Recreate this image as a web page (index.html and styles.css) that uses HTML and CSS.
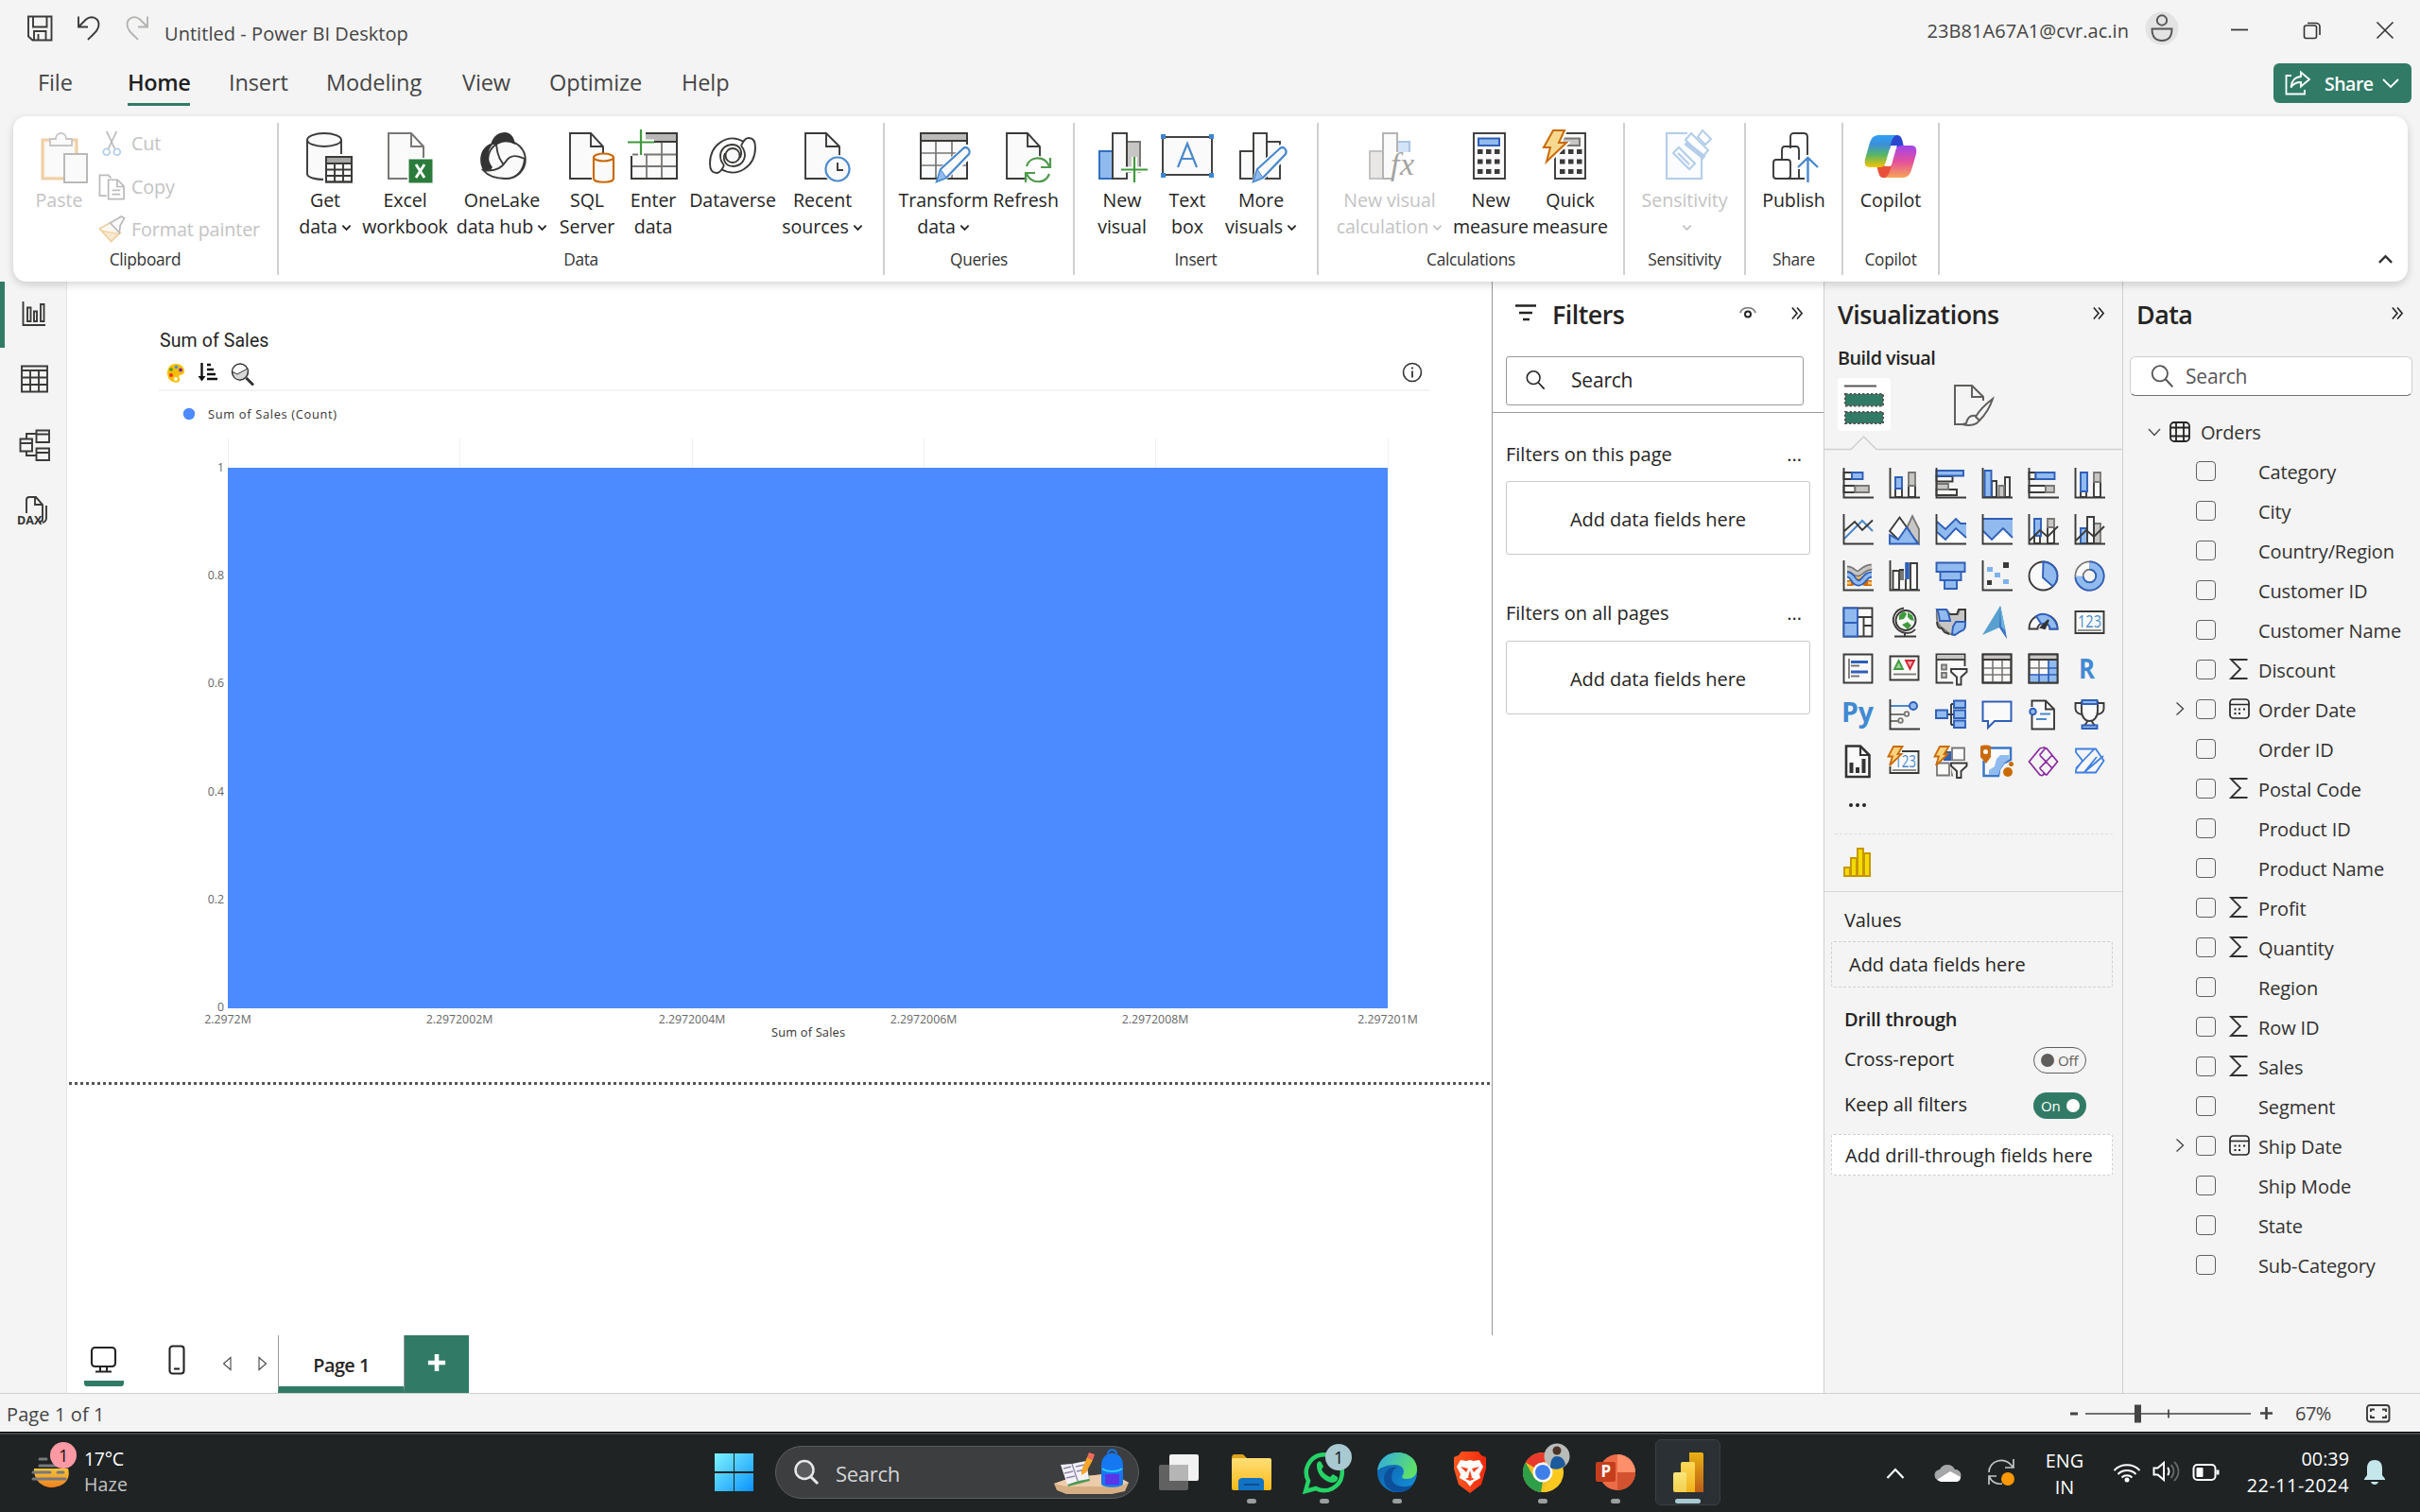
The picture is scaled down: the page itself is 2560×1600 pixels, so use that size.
FILE: index.html
```html
<!DOCTYPE html>
<html lang="en">
<head>
<meta charset="utf-8">
<title>Untitled - Power BI Desktop</title>
<link rel="stylesheet" href="styles.css">
</head>
<body>
<svg class="defs" width="0" height="0">
  <defs>
    <symbol id="dbl-chevron" viewBox="0 0 14 16"><path d="M1.5 1.5 7 8l-5.500 6.500M7 1.500 12.500 8 7 14.500" fill="none" stroke="#252423" stroke-width="1.700"/></symbol>
    <symbol id="sigma" viewBox="0 0 24 24"><path d="M20.500 2H3l10 10L3 22h17.500" fill="none" stroke="#323130" stroke-width="1.800"/></symbol>
    <symbol id="calendar" viewBox="0 0 24 24"><rect x="2" y="2" width="20" height="20" rx="3.500" fill="none" stroke="#252423" stroke-width="1.700"/><path d="M2 7.500h20" stroke="#252423" stroke-width="1.500"/><path d="M6.500 12.500h2M11 12.500h2M16 12.500h2M6.500 17h2M11 17h2" stroke="#252423" stroke-width="2"/></symbol>
    <symbol id="expand" viewBox="0 0 10 16"><path d="M1.500 1.500 8.500 8l-7 6.500" fill="none" stroke="#484644" stroke-width="1.400"/></symbol>
    <symbol id="caret" viewBox="0 0 12 8"><path d="M1.500 1.500 6 6l4.500-4.500" fill="none" stroke="currentColor" stroke-width="2"/></symbol>
    <symbol id="mag" viewBox="0 0 24 24"><circle cx="10" cy="9.500" r="7.500" fill="none" stroke="currentColor" stroke-width="1.700"/><path d="m15.500 15 7 7.500" stroke="currentColor" stroke-width="1.900"/></symbol>
    <linearGradient id="winGrad" x1="0" y1="0" x2="1" y2="1"><stop offset="0" stop-color="#7df3ff"/><stop offset="1" stop-color="#0a93ff"/></linearGradient>
    <linearGradient id="cpL" x1="0" y1="0" x2="0" y2="1"><stop offset="0" stop-color="#2fa0f5"/><stop offset=".3" stop-color="#3b8fd8"/><stop offset=".6" stop-color="#55b56a"/><stop offset="1" stop-color="#f2c500"/></linearGradient>
    <linearGradient id="cpR" x1="0" y1="0" x2="0" y2="1"><stop offset="0" stop-color="#a044ee"/><stop offset=".5" stop-color="#e5509a"/><stop offset="1" stop-color="#f7a455"/></linearGradient>
    <linearGradient id="edgeTop" x1="0" y1="0" x2="1" y2=".4"><stop offset="0" stop-color="#2ea8e8"/><stop offset="1" stop-color="#5fe06a"/></linearGradient>
    <linearGradient id="edgeLow" x1="0" y1="0" x2="1" y2="1"><stop offset="0" stop-color="#0c59a4"/><stop offset="1" stop-color="#1593dd"/></linearGradient>
    <linearGradient id="folderGrad" x1="0" y1="0" x2="0" y2="1"><stop offset="0" stop-color="#ffdf77"/><stop offset="1" stop-color="#fbb917"/></linearGradient>
    <linearGradient id="braveGrad" x1="0" y1="0" x2="1" y2="0"><stop offset="0" stop-color="#ff5a1f"/><stop offset="1" stop-color="#f2280c"/></linearGradient>
    <linearGradient id="biA" x1="0" y1="0" x2="0" y2="1"><stop offset="0" stop-color="#ebb112"/><stop offset="1" stop-color="#bb5c17"/></linearGradient>
    <linearGradient id="biB" x1="0" y1="0" x2="0" y2="1"><stop offset="0" stop-color="#ffd95a"/><stop offset="1" stop-color="#f0b318"/></linearGradient>
    <linearGradient id="biC" x1="0" y1="0" x2="0" y2="1"><stop offset="0" stop-color="#fbe67b"/><stop offset="1" stop-color="#f2cf4f"/></linearGradient>
    <linearGradient id="sunGrad" x1="0" y1="0" x2="0" y2="1"><stop offset="0" stop-color="#f6c63a"/><stop offset="1" stop-color="#f0801e"/></linearGradient>
  </defs>
</svg>

<header class="titlebar">
  <svg class="tb-save" viewBox="0 0 28 28"><path class="k" d="M1.500 1.500h24.500v25H6l-4.500-4zM6.500 1.500v11h14.500v-11M7.500 26.500v-9.500h12.500v9.500M12 20v6"/></svg>
  <svg class="tb-undo" viewBox="0 0 26 28"><path class="k" d="M2 1.500v11h10M2.500 12 10 4.500c5-4.500 13-2 13.500 5 .300 6-5 10-11.500 16.500"/></svg>
  <svg class="tb-redo" viewBox="0 0 26 28"><path d="M24 1.500v11H14M23.500 12 16 4.500C11 0 3 2.500 2.500 9.500c-.300 6 5 10 11.500 16.500" fill="none" stroke="#b3b0ad" stroke-width="1.800"/></svg>
  <span class="tb-title">Untitled - Power BI Desktop</span>
  <span class="tb-user">23B81A67A1@cvr.ac.in</span>
  <svg class="tb-avatar" viewBox="0 0 36 36"><circle cx="18" cy="18" r="17.500" fill="#e3e3e3"/><circle cx="18" cy="9.500" r="5.200" fill="none" stroke="#555" stroke-width="1.900"/><path d="M7.500 18.500h21c0 8-3.500 12.500-10.500 12.500S7.500 26.500 7.500 18.500z" fill="none" stroke="#555" stroke-width="1.900"/></svg>
  <svg class="tb-win" viewBox="0 0 20 20"><path d="M1 9.500h18" stroke="#333" stroke-width="1.700"/></svg>
  <svg class="tb-win" viewBox="0 0 20 20"><rect x="1.500" y="5" width="13" height="13.500" rx="2" class="w"/><path class="w" d="M5 2.500h9a4 4 0 0 1 4 4V15"/></svg>
  <svg class="tb-win" viewBox="0 0 20 20"><path class="w" d="m1.500 1.500 17 17M18.500 1.500l-17 17"/></svg>
</header>

<nav class="menu">
  <a>File</a><a class="on">Home</a><a>Insert</a><a>Modeling</a><a>View</a><a>Optimize</a><a>Help</a>
  <button class="share"><svg viewBox="0 0 28 26" width="28" height="26"><path d="M7 5H1.500v19.500H21V20" class="ws"/><path d="M17 1.500 26 9l-9 7.500v-4.500c-5 0-8 1.500-10.500 5.500C7 10.500 10.500 6.500 17 6z" class="ws"/></svg><span>Share</span><svg viewBox="0 0 18 10" width="18" height="10"><path d="m1 1 8 8 8-8" class="ws"/></svg></button>
</nav>

<section class="ribbon">
  <div class="grp g-clip">
    <div class="btns">
      <div class="paste dim"><svg viewBox="0 0 60 60"><rect x="12" y="13" width="36" height="41" fill="#fbf3e6" stroke="#efcfa4" stroke-width="3"/><rect x="15" y="16" width="30" height="35" fill="#fafafa"/><path d="M20 19v-7h6c0-8 11-8 11 0h6v7z" fill="#fafafa" stroke="#c8c6c4" stroke-width="1.800"/><rect x="35" y="28" width="24" height="30" fill="#fafafa" stroke="#b8b6b4" stroke-width="1.900"/></svg><span>Paste</span></div>
      <div class="clips dim">
        <div><svg viewBox="0 0 30 30"><path d="m9 2 9 19M20 2l-9 19" stroke="#bbb" stroke-width="1.700" fill="none"/><circle cx="9" cy="24.500" r="3.500" fill="none" stroke="#b3cdea" stroke-width="1.800"/><circle cx="20.500" cy="24.500" r="3.500" fill="none" stroke="#b3cdea" stroke-width="1.800"/></svg>Cut</div>
        <div><svg viewBox="0 0 30 30"><path d="M9 25H1.500V2.500h9.500l3 3" class="d"/><path d="M11 7.500h10l7 7v14H11zM20.500 7.500v7.500H28M15 19h9M15 23.500h9" class="d"/></svg>Copy</div>
        <div><svg viewBox="0 0 30 30"><path d="M1.500 14.500 13 8l11 11-10 9.500z" fill="#fdf8ef" stroke="#efcfa4" stroke-width="1.800"/><path d="m4 17 18 3-8 8z" fill="#f8ead0" stroke="#efcfa4" stroke-width="1.200"/><path d="m13 8 4-2 8-5 3.500 2-4.500 8-1 8z" fill="#fafafa" class="d2"/></svg>Format painter</div>
      </div>
    </div>
    <label>Clipboard</label>
  </div>
  <div class="grp g-data">
    <div class="btns">
      <div class="b w84"><svg viewBox="0 0 60 60"><path class="kf" d="M11 13v36c0 8 36 8 36 0V13"/><ellipse class="kf" cx="29" cy="13" rx="18" ry="7"/><g class="halo"><rect x="31" y="31" width="27" height="27"/></g><rect class="kf" x="31" y="31" width="27" height="26.500"/><path d="M31 34.500h27" stroke="#a9a7a5" stroke-width="5"/><path class="k" d="M31 31h27v26.500H31zM31 38h27M31 44.500h27M31 51h27M40 38v19M49 38v19"/></svg><span>Get<br>data<svg class="cr"><use href="#caret"/></svg></span></div>
      <div class="b w85"><svg viewBox="0 0 60 60"><path d="M12 6h24l13 14v34H12z" fill="#fafafa" stroke="#797774" stroke-width="2"/><path d="M36 6v14h13" fill="none" stroke="#797774" stroke-width="2"/><rect x="32" y="32" width="28" height="28" fill="#fff"/><rect x="33.500" y="33.500" width="25" height="25" fill="#2b7c3c"/><path d="m41 39 9 14M50 39l-9 14" stroke="#fff" stroke-width="2.800"/></svg><span>Excel<br>workbook</span></div>
      <div class="b w120"><svg viewBox="0 0 60 60"><circle class="kf" cx="35" cy="34" r="19.800"/><path d="M18 18C21 8 27 5 33 5c6 0 10 5 11 13-7-4-15-4-20 0z" fill="#333"/><path d="M18 17C6 22 5 36 10 45c4 1 8 0 10-3-6-8-6-17 0-24z" fill="#333"/><path class="k" d="M24 18c1 11 4 19 11 24"/><path d="M10 45c12 2 19-1 24-9 5-8 12-7 20-3-1 13-9 21-20 21-10 0-19-3-24-9z" class="kf"/></svg><span>OneLake<br>data hub<svg class="cr"><use href="#caret"/></svg></span></div>
      <div class="b w60"><svg viewBox="0 0 60 60"><path class="kf" d="M12 6h22l13 14v34H12z"/><path class="k" d="M34 6v14h13"/><path d="M35 31h26v27H35z" fill="#fff"/><path d="M37 32v22c0 5 21 5 21 0V32" fill="#fafafa" stroke="#ca6a07" stroke-width="2.200"/><ellipse cx="47.500" cy="31.500" rx="10.500" ry="4" fill="#fafafa" stroke="#ca6a07" stroke-width="2.200"/></svg><span>SQL<br>Server</span></div>
      <div class="b w80"><svg viewBox="0 0 60 60"><path d="M24 6h31v48H7V30" class="kf"/><path d="M22 10.500h32" stroke="#b9b7b5" stroke-width="8"/><path d="M8 28.500h47M8 41h47M23 28v25M39 14v40" stroke="#797774" stroke-width="1.800" fill="none"/><path class="k" d="M22 15h33M22 6h33v48H7V30"/><path d="M4 15.500h27M17 3v27" stroke="#fff" stroke-width="6"/><path d="M3 15.500h28M17 2v27" stroke="#3f9a3c" stroke-width="2.200"/></svg><span>Enter<br>data</span></div>
      <div class="b w88"><svg viewBox="0 0 60 60"><g id="swirl"><path class="k" d="M42 15C25 5 6 18 6 38c0 7 3 10 7 10 5 0 6-5 8-8"/><path class="k" d="M21 40C13 30 18 19 29 18c9 0 12 7 9 14"/></g><use href="#swirl" transform="rotate(180 30 29.500)"/><circle class="kf" cx="30" cy="29.500" r="7.500"/></svg><span>Dataverse</span></div>
      <div class="b w102"><svg viewBox="0 0 60 60"><path class="kf" d="M12 6h22l14 14v34H12z"/><path class="k" d="M34 6v14h14"/><circle cx="46" cy="44" r="15" fill="#fff"/><circle cx="46" cy="44" r="12.500" fill="#fafafa" stroke="#4a89cc" stroke-width="2.200"/><path class="k" d="M46 37v8h6"/></svg><span>Recent<br>sources<svg class="cr"><use href="#caret"/></svg></span></div>
    </div>
    <label>Data</label>
  </div>
  <div class="grp g-query">
    <div class="btns">
      <div class="b w100"><svg viewBox="0 0 60 60"><path class="kf" d="M6 6h49v48H6z"/><path d="M7 10.500h47" stroke="#bdbbb9" stroke-width="7"/><path d="M6 27h49M6 40h49M22 15v38M39 15v38" stroke="#797774" stroke-width="1.700"/><path class="k" d="M6 14h49M6 6h49v48H6z"/><path d="m22 58 4-15 26-25h10v12L32 56z" fill="#fff"/><path d="m23 57 4-13 24-22c4-3 8 2 6 6L33 53z" fill="#fafafa" stroke="#4a89cc" stroke-width="2.200"/><path d="m23 57 4-13 6 9z" fill="#91bbee" stroke="#4a89cc"/></svg><span>Transform<br>data<svg class="cr"><use href="#caret"/></svg></span></div>
      <div class="b w74"><svg viewBox="0 0 60 60"><path class="kf" d="M10 6h22l13 14v34H10z"/><path class="k" d="M32 6v14h13"/><circle cx="43" cy="45" r="15" fill="#fff"/><path d="M31 41c3-11 19-12 24 0M56 32v10H46M55 49c-4 11-19 11-24 0M30 58V48h10" fill="none" stroke="#4f9a4c" stroke-width="2.200"/></svg><span>Refresh</span></div>
    </div>
    <label>Queries</label>
  </div>
  <div class="grp g-insert">
    <div class="btns">
      <div class="b w62"><svg viewBox="0 0 60 60"><rect x="6" y="25" width="14" height="29" fill="#91bbee" stroke="#2f6fc0" stroke-width="2"/><rect x="35" y="15" width="14" height="32" fill="#c8c6c4" stroke="#797774" stroke-width="2"/><rect x="20" y="6" width="15" height="48" class="kf"/><path d="M29 44.500h29M43 31v28" stroke="#fff" stroke-width="6"/><path d="M29 44.500h28M43 31v27" stroke="#3f9a3c" stroke-width="2.200"/></svg><span>New<br>visual</span></div>
      <div class="b w76"><svg viewBox="0 0 60 60"><rect x="4" y="10" width="52" height="40" class="kf"/><path d="M2 7h5v5H2zM53 7h5v5h-5zM2 48h5v5H2zM53 48h5v5h-5z" fill="#3d85d6"/><path d="m20 42 10-25 10 25M24 33h12" fill="none" stroke="#4a89cc" stroke-width="2.200"/></svg><span>Text<br>box</span></div>
      <div class="b w80"><svg viewBox="0 0 60 60"><rect x="8" y="25" width="14" height="29" class="kf"/><rect x="36" y="15" width="14" height="39" class="kf"/><rect x="22" y="6" width="14" height="48" class="kf"/><path d="m20 60 4-17 26-25h10v12L32 56z" fill="#fff"/><path d="m22 57 4-13 24-22c4-3 8 2 6 6L32 53z" fill="#fafafa" stroke="#4a89cc" stroke-width="2.200"/><path d="m22 57 4-13 6 9z" fill="#91bbee" stroke="#4a89cc"/></svg><span>More<br>visuals<svg class="cr"><use href="#caret"/></svg></span></div>
    </div>
    <label>Insert</label>
  </div>
  <div class="grp g-calc">
    <div class="btns">
      <div class="b w124 dim"><svg viewBox="0 0 60 60"><rect x="9" y="25" width="14" height="29" fill="#e8e7e6" stroke="#c4c2c0" stroke-width="2"/><rect x="38" y="15" width="13" height="14" fill="#d3e4f8" stroke="#aac4e4" stroke-width="2"/><rect x="23" y="6" width="15" height="48" fill="#fafafa" stroke="#b5b3b1" stroke-width="2"/><rect x="33" y="26" width="27" height="30" fill="#fff"/><text x="31" y="50" font-family="Liberation Serif, serif" font-style="italic" font-size="34" fill="#a5a3a1" textLength="25">fx</text></svg><span>New visual<br>calculation<svg class="cr"><use href="#caret"/></svg></span></div>
      <div class="b w90"><svg viewBox="0 0 60 60"><rect x="12" y="6" width="33" height="48" class="kf"/><rect x="17" y="11.500" width="22" height="7.500" fill="#91bbee" stroke="#2f5fb8" stroke-width="2"/><path d="M16 25.500h25M16 36h25M16 46.500h25" stroke="#3a3a38" stroke-width="5" stroke-dasharray="5.500 3.500"/></svg><span>New<br>measure</span></div>
      <div class="b w78"><svg viewBox="0 0 60 60"><rect x="14" y="6" width="32" height="48" class="kf"/><rect x="20" y="11.500" width="20" height="7.500" fill="#c8c6c4" stroke="#797774" stroke-width="2"/><path d="M19 25.500h24M19 36h24M19 46.500h24" stroke="#3a3a38" stroke-width="5" stroke-dasharray="5.500 3.500"/><path d="M12 1h16l-6 14h9L6 40H0l4-17H0z" fill="#fff"/><path d="M12 3h12l-6 13h8L5 36l4-15H2z" fill="#f6d98f" stroke="#ca6a07" stroke-width="2"/></svg><span>Quick<br>measure</span></div>
    </div>
    <label>Calculations</label>
  </div>
  <div class="grp g-sens">
    <div class="btns"><div class="b dim"><svg viewBox="0 0 60 60"><path d="M33 6H11v48h37V30" fill="#fafcff" stroke="#b3cdea" stroke-width="2"/><path d="m18 27 6-6 17 17-6 6zM23 27l12 12" fill="none" stroke="#b3cdea" stroke-width="2"/><path d="m31 13 6-7 18 18-6 7z" fill="#fff" stroke="#b3cdea" stroke-width="2"/><path d="m31 16 20 16" stroke="#b3cdea" stroke-width="5"/><path d="m44 10 5-7 9 9-6 6z" fill="#fff" stroke="#b3cdea" stroke-width="2"/></svg><span>Sensitivity<br><svg class="cr"><use href="#caret"/></svg></span></div></div>
    <label>Sensitivity</label>
  </div>
  <div class="grp g-share">
    <div class="btns"><div class="b"><svg viewBox="0 0 60 60"><path class="k" d="M27 20V10c0-2 1-4 3-4h11c3 0 4 2 4 4v19M18 34V24c0-2 1-4 3-4h12c2 0 3 2 3 4v10M36 44v10"/><rect x="9" y="34" width="18" height="20" rx="3" class="k"/><path class="k" d="M24 54h18M27 22v-2"/><path d="M45.500 58V32M35 42l10.500-10L56 42" fill="none" stroke="#4a89cc" stroke-width="2.400"/></svg><span>Publish</span></div></div>
    <label>Share</label>
  </div>
  <div class="grp g-copilot">
    <div class="btns"><div class="b"><svg viewBox="0 0 60 60"><path d="M27 8h10c4 0 5 4 6 8l1 5H33c-4 0-5 3-6 7z" fill="#2b46cf"/><path d="M15 40h18l-3 6c-1 4-2 7-5 7h-3c-5 0-5-8-7-13z" fill="#e9503a"/><path d="M18 8h18c-4 2-5 6-6 10l-5 18c-1 4-3 6-7 6H8c-5 0-6-4-5-9l5-17c2-6 5-8 10-8z" fill="url(#cpL)"/><path d="M42 53H24c4-2 5-6 6-10l5-18c1-4 3-6 7-6h10c5 0 6 4 5 9l-5 17c-2 6-5 8-10 8z" fill="url(#cpR)"/><path d="M30 19h7l-2 4-5 18h-7l3-5z" fill="#fff" opacity=".900"/></svg><span>Copilot</span></div></div>
    <label>Copilot</label>
  </div>
  <svg class="fold" viewBox="0 0 18 12"><path d="m2 10 7-7 7 7" fill="none" stroke="#333" stroke-width="2.600"/></svg>
</section>

<main class="work">
  <aside class="rail">
    <div class="rail-on"><svg viewBox="0 0 36 36"><path class="k" d="M6.500 5v25H30M11 11.500h3.500V26H11zM18 15.500h3V26h-3zM25 8h3.500v18H25z"/></svg></div>
    <div><svg viewBox="0 0 36 36"><path class="k" d="M5 4.500h27v27H5zM5 9h27M5 16.500h27M5 24h27M14 9v22.500M23 9v22.500"/></svg></div>
    <div><svg viewBox="0 0 36 36"><path class="k" d="M20.500 2.500H34V15H20.500zM20.500 6.500H34M3.500 11.500H16v13H3.500zM3.500 16H16M20.500 21.500H34V34H20.500zM20.500 26H34M10 11.500V6h10M10 24.500V29h10"/></svg></div>
    <div><svg viewBox="0 0 36 36"><path class="k" d="M10 20V6q0-3 3-3h7l7 8v15q0 3-3 3M19 3v8h8M31 12v13q0 4-4 5"/><text x="0" y="32" class="dax">DAX</text></svg></div>
  </aside>

  <div class="center">
    <div class="upper">
      <div class="canvas">
        <h3>Sum of Sales</h3>
        <div class="ctools">
          <svg width="20" height="22" viewBox="0 0 20 22"><path d="M10 1c6 0 9 4 9 8 0 3-3 4-5 4-2 1 1 4 0 6-3 4-13 1-13-8C1 5 4 1 10 1z" fill="#f6be00"/><circle cx="5" cy="7" r="1.800" fill="#3f9a3c"/><circle cx="10.500" cy="4.500" r="1.800" fill="#4a90d9"/><circle cx="15" cy="7.500" r="2" fill="#8426a5"/><circle cx="5" cy="13" r="2" fill="#f0302c"/><circle cx="10" cy="17" r="2" fill="#fff"/></svg>
          <svg width="22" height="20" viewBox="0 0 22 20"><path d="M4.500 0v16" stroke="#111" stroke-width="2.400"/><path d="M.500 14h8l-4 5.500z" fill="#111"/><path d="M10 2h4M10 7h7M10 12h9M10 17h11" stroke="#111" stroke-width="2.400"/></svg>
          <svg width="26" height="26" viewBox="0 0 26 26"><circle cx="10" cy="9.500" r="8.500" fill="#fff" stroke="#333" stroke-width="1.400"/><path d="M2 9.500 7 12l11-6c1 6-2 11-8 12-5 0-8-4-8-8.500z" fill="#d8d8d8" stroke="#333" stroke-width="1"/><path d="m16.500 16 7.500 7.500" stroke="#333" stroke-width="3"/></svg>
          <svg class="info" width="22" height="22" viewBox="0 0 22 22"><circle cx="11" cy="11" r="9.500" fill="none" stroke="#333" stroke-width="1.600"/><path d="M11 9.500v7M11 5.500v2" stroke="#333" stroke-width="1.800"/></svg>
        </div>
        <svg class="plot" viewBox="168 414 1344 696">
          <circle cx="200" cy="438" r="6.200" fill="#4c8aff"/>
          <text x="220" y="443" textLength="136" class="leg">Sum of Sales (Count)</text>
          <path d="M241.500 464v32M486.500 464v32M732.500 464v32M977.500 464v32M1222.500 464v32M1468.500 464v32" stroke="#efefef"/>
          <rect x="241" y="495" width="1227" height="572" fill="#4c8aff"/>
          <g class="ax" text-anchor="end"><text x="237" y="499">1</text><text x="237" y="613">0.8</text><text x="237" y="727">0.6</text><text x="237" y="842">0.4</text><text x="237" y="956">0.2</text><text x="237" y="1070">0</text></g>
          <g class="ax" text-anchor="middle"><text x="241" y="1082.500">2.2972M</text><text x="486" y="1082.500">2.2972002M</text><text x="732" y="1082.500">2.2972004M</text><text x="977" y="1082.500">2.2972006M</text><text x="1222" y="1082.500">2.2972008M</text><text x="1468" y="1082.500">2.297201M</text></g>
          <text x="855" y="1096.500" text-anchor="middle" textLength="78" class="leg">Sum of Sales</text>
        </svg>
        <div class="fold-line"></div>
      </div>

      <section class="filters">
        <div class="ptitle"><svg width="24" height="20" viewBox="0 0 24 20"><path d="M1 2.500h22M5 10h14M9 17h7" stroke="#252423" stroke-width="2.300"/></svg><h2>Filters</h2><svg class="eye" width="18" height="16" viewBox="0 0 18 16"><path d="M1 8C3 1 15 1 17 8" fill="none" stroke="#777" stroke-width="1.700"/><circle cx="9" cy="9.500" r="3" fill="none" stroke="#252423" stroke-width="2"/></svg><svg class="dc"><use href="#dbl-chevron"/></svg></div>
        <div class="fsearch"><svg width="22" height="22"><use href="#mag"/></svg>Search</div>
        <div class="fhead"><span>Filters on this page</span><i>...</i></div>
        <div class="fbox">Add data fields here</div>
        <div class="fhead second"><span>Filters on all pages</span><i>...</i></div>
        <div class="fbox">Add data fields here</div>
      </section>
    </div>
    <footer class="tabs">
      <div class="dev on"><svg width="30" height="32" viewBox="0 0 30 32"><rect x="2" y="3" width="25" height="20" rx="3.500" class="t"/><path class="t" d="M11 23v5M18 23v5M6 28.500h17"/></svg></div>
      <svg class="phone" width="18" height="32" viewBox="0 0 18 32"><rect x="1.500" y="1.500" width="15" height="29" rx="3" class="t"/><path class="t" d="M6 25.500h6"/></svg>
      <svg class="tri" width="10" height="16" viewBox="0 0 10 16"><path d="M9 1.500v13L1.500 8z" class="tr"/></svg>
      <svg class="tri two" width="10" height="16" viewBox="0 0 10 16"><path d="M1 1.500v13L8.500 8z" class="tr"/></svg>
      <div class="tab">Page 1</div>
      <div class="plus"><svg width="20" height="20" viewBox="0 0 22 22"><path d="M11 1v20M1 11h20" stroke="#fff" stroke-width="5"/></svg></div>
    </footer>
  </div>

  <section class="viz">
    <div class="ptitle"><h2>Visualizations</h2><svg class="dc"><use href="#dbl-chevron"/></svg></div>
    <h4>Build visual</h4>
    <div class="modes">
      <div class="mode"><svg width="44" height="42" viewBox="0 0 44 42"><path d="M1 1.500h34" stroke="#555" stroke-width="2"/><rect x="2" y="10" width="40" height="12.500" fill="#317b66" stroke="#555" stroke-width="2" stroke-dasharray="2.500 2"/><rect x="2" y="29" width="40" height="12" fill="#317b66" stroke="#555" stroke-width="2" stroke-dasharray="2.500 2"/></svg></div>
      <svg class="fmt" width="46" height="46" viewBox="0 0 46 46"><path d="M9 43H2V2h18l12 12v4M20 2v12h12" fill="none" stroke="#605e5c" stroke-width="2"/><path d="M42 16c-8 6-14 12-18 19l4 4c6-6 11-14 14-23zM24 34c-6-1-9 3-10 8l-4 1c7 2 16 1 18-5" fill="none" stroke="#605e5c" stroke-width="2"/></svg>
    </div>
    <svg class="notch" width="315" height="16" viewBox="0 0 315 16"><path d="M0 14.500h28l13.500-13.500L55 14.500h260" fill="none" stroke="#cfcfcf" stroke-width="1.500"/></svg>
    <div class="icons">
      <svg viewBox="0 0 33 33"><path class="kf" d="M1.500 5h9v7h-9zM1.500 19h12v7h-12z"/><path class="bf" d="M10 5h11.500v7H10z"/><path class="gf" d="M13.500 19H28v7H13.500z"/><path class="k" d="M1.500 0v31.500H33"/></svg>
      <svg viewBox="0 0 33 33"><path class="kf" d="M7 21h7v10H7zM21 19h7v12h-7z"/><path class="bf" d="M7 10h7v12H7z"/><path class="gf" d="M21 5h7v14h-7z"/><path class="k" d="M1.500 0v31.500H33"/></svg>
      <svg viewBox="0 0 33 33"><path class="kf" d="M1.500 9h17v5.500h-17zM1.500 23H23v6H1.500z"/><path class="gf" d="M1.500 17H14v6H1.500z"/><path class="bf" d="M1.500 3H30v5.500H1.500z"/><path class="k" d="M1.500 0v31.500H33"/></svg>
      <svg viewBox="0 0 33 33"><path class="kf" d="M11 14h5v17h-5zM25 10h5v21h-5z"/><path class="gf" d="M18.500 19H24v12h-5.500z"/><path class="bf" d="M3.500 3h7v28h-7z"/><path class="k" d="M1.500 0v31.500H33"/></svg>
      <svg viewBox="0 0 33 33"><path class="kf" d="M1.500 5h7v7h-7zM1.500 19H19v7H1.500z"/><path class="bf" d="M8.500 5h20v7h-20z"/><path class="gf" d="M19 19h9v7h-9z"/><path class="k" d="M1.500 0v31.500H33"/></svg>
      <svg viewBox="0 0 33 33"><path class="kf" d="M7 25h6v6H7zM21 15h7v16h-7z"/><path class="bf" d="M7 5h7v20H7z"/><path class="gf" d="M21 5h7v10h-7z"/><path class="k" d="M1.500 0v31.500H33"/></svg>

      <svg viewBox="0 0 33 33"><path d="M2 26 21 7l11 11" fill="none" stroke="#4a89cc" stroke-width="2"/><path class="k" d="m2 18 11-10 8 9L32 6.500M1.500 0v31.500H33"/></svg>
      <svg viewBox="0 0 33 33"><path class="gf" d="M18 17 25 2l7 14v15z"/><path class="kf" d="M1 18 11.500 3.500 22 18 10 27z"/><path class="bf" d="m1 22 9 5 9-13 12 17.500H1z"/></svg>
      <svg viewBox="0 0 33 33"><path d="M2 8v22h31V18z" fill="#fff"/><path class="bl" d="m2 8 9 8L22 5l5 5h6v15L22 15 11 27l-9-8z"/><path d="m2 8 9 8L22 5l5 5h6M2 19l9 8 11-12 11 10" class="bs"/><path class="k" d="M1.500 0v31.500H33"/></svg>
      <svg viewBox="0 0 33 33"><path d="M2 20v10h31V20z" fill="#fff"/><path class="bl" d="M2 5h31v20l-10-10-12 12-9-9z"/><path class="bs" d="M2 5h31M2 18l9 9 12-12 10 10"/><path class="k" d="M1.500 0v31.500H33"/></svg>
      <svg viewBox="0 0 33 33"><path class="kf" d="M7 22h6v9H7zM21 14h7v17h-7z"/><path class="bf" d="M7 5h7v18H7z"/><path class="gf" d="M21 5h7v9h-7z"/><path class="k" d="M1.500 0v31.500H33M2 28l11-11 8 7L32 13"/></svg>
      <svg viewBox="0 0 33 33"><path class="bf" d="M7 15h7v16H7z"/><path class="gf" d="M21 10h7v21h-7z"/><path class="kf" d="M14 3h7v28h-7z"/><path class="k" d="M1.500 0v31.500H33M2 28l11-11 8 7L32 13"/></svg>

      <svg viewBox="0 0 33 33"><path d="M5 24h5c4 0 6-6 10-3l4 3h7" stroke="#ca6a07" stroke-width="6" fill="none"/><path d="M5 24h4M27 24h4M15 18h6" stroke="#f6c36a" stroke-width="3"/><path d="M5 9c6 0 7 5 11 5s5-6 15-7" stroke="#797774" stroke-width="7" fill="none"/><path d="M5 9c6 0 7 5 11 5s5-6 15-7" stroke="#c8c6c4" stroke-width="3.500" fill="none"/><path d="M5 15c7 0 6 9 12 9s6-9 14-9" stroke="#2f5fb8" stroke-width="7" fill="none"/><path d="M5 15c7 0 6 9 12 9s6-9 14-9" stroke="#91bbee" stroke-width="3.500" fill="none"/><path class="k" d="M1.500 0v31.500H33"/></svg>
      <svg viewBox="0 0 33 33"><path class="kf" d="M4.500 11H11v20H4.500zM23 3h7v28h-7z"/><path d="M14 10v11" stroke="#797774" stroke-width="4"/><path d="M19.500 2v18" stroke="#2f5fb8" stroke-width="4.500"/><path class="k" d="M1.500 0v31.500H33M11 10h5M18 20v11"/></svg>
      <svg viewBox="0 0 33 33"><path class="bf" d="M1.500 2.500h30V12h-30zM5.500 12h22v9h-22zM10 21h13v9H10z"/></svg>
      <svg viewBox="0 0 33 33"><path class="k" d="M1.500 0v31.500H33"/><path d="M23 2h6v6h-6zM6 21h5v5H6z" fill="#3a3a38"/><path d="M6 7h6v5H6zM14 13h6v5h-6zM23 20h6v5h-6z" fill="#7fb2ea"/></svg>
      <svg viewBox="0 0 33 33"><circle class="kf" cx="16.500" cy="16.500" r="15"/><path class="bf" d="M16.500 1.500a15 15 0 0 1 10 26L16 18z"/></svg>
      <svg viewBox="0 0 33 33"><circle cx="16.500" cy="16.500" r="11" fill="none" stroke="#797774" stroke-width="10"/><circle cx="16.500" cy="16.500" r="11" fill="none" stroke="#fafafa" stroke-width="6.500"/><path d="M16.500 5.500a11 11 0 1 1-11 12" fill="none" stroke="#2f5fb8" stroke-width="10"/><path d="M16.500 5.500a11 11 0 1 1-11 11" fill="none" stroke="#91bbee" stroke-width="6.500"/></svg>

      <svg viewBox="0 0 33 33"><path class="kf" d="M1.500 1.500h30v30h-30z"/><path class="k" d="M16 11h15M22.500 11v20M22.500 20H31"/><path class="bf" d="M1.500 1.500H16V17H1.500zM1.500 17H16v14.500H1.500z"/></svg>
      <svg viewBox="0 0 33 33"><circle class="kf" cx="18" cy="14.500" r="10.500"/><path d="M11 9c4-5 7-4 8-1l-3 5-5 1zM20 6l5 3 2 6-4-1-3-3zM14 19l6-3 4 4-4 4z" fill="#3f9a3c"/><path class="k" d="M16 1.500C6 3 2 13 7 21s16 9 21 3M17 28v3M6 31.500h23"/></svg>
      <svg viewBox="0 0 33 33"><path class="gf" d="M2 3h10l4 5h8l2-5h6v18c-3 5-8 6-12 9-6 0-8-5-13-8-4-3-6-6-5-19z"/><path class="k" d="M15 8h8l2-5h7v12M2 16c0 5 2 7 5 7l3 4 5 2"/><path class="bf" d="M2 3h10c3 4 3 8 4 12H5c-1-4 0-7-3-12zM22 16h10c0 5 0 9-5 10l-6 4-3-1 1-8z"/></svg>
      <svg viewBox="0 0 33 33"><path d="M20-1 27 34 19 22 1 30z" fill="#58a0d0"/><path d="m20-1 7 35-8-12z" fill="#3f72c4"/><path d="m20-1 6 27-5-5z" fill="#69b2da"/></svg>
      <svg viewBox="0 0 33 33"><path class="kf" d="M1.500 23.500c0-20 30-20 30 0h-8c0-8-13-8-13 0z"/><path class="bf" d="M9 10c10-6 22 2 22.500 13.500h-8c0-5-5-7-9-5z"/><path d="m14 22 8-8-4 9z" fill="#333" stroke="#333" stroke-width="2"/></svg>
      <svg viewBox="0 0 33 33"><path class="kf" d="M1.500 5h30v23h-30z"/><path d="M4 25h25" stroke="#797774" stroke-width="1.600"/><text x="4" y="21.500" class="n123" textLength="25" lengthAdjust="spacingAndGlyphs">123</text></svg>

      <svg viewBox="0 0 33 33"><path class="kf" d="M1.500 1.500h30v30h-30z"/><path d="M7 6v21M9 13.500h9M9 24.500h9" stroke="#797774" stroke-width="1.800"/><path d="M9 9.500h18M9 20h18" stroke="#2f5fb8" stroke-width="3"/></svg>
      <svg viewBox="0 0 33 33"><path class="kf" d="M1.500 3.500h30v25h-30z"/><path d="M5 22.500h24" stroke="#797774" stroke-width="1.800"/><path d="m10.500 8 4.500 9H6z" fill="#9bd29a" stroke="#3f9a3c" stroke-width="1.800"/><path d="M18 8h9l-4.500 9z" fill="#f4a3a8" stroke="#d2202c" stroke-width="1.800"/></svg>
      <svg viewBox="0 0 33 33"><path class="kf" d="M1.500 1.500h30v30h-30z"/><path class="gt" d="M2.500 4h28"/><path class="k" d="M1.500 7h30"/><path class="gf" d="M7 12.500h5v5H7zM7 21h5v5H7z"/><path d="M15 14h20v21H20z" fill="#f4f4f4"/><path class="kf" d="M17 17h16.500v3l-6 5.500v8h-4.500v-8L17 20z"/></svg>
      <svg viewBox="0 0 33 33"><path class="kf" d="M1.500 1.500h30v30h-30z"/><path class="gt" d="M2.500 4h28"/><path d="M2 16h30M2 23h30M12 7v24M22 7v24" stroke="#797774" stroke-width="1.600"/><path class="k" d="M1.500 7h30M1.500 1.500h30v30h-30z"/></svg>
      <svg viewBox="0 0 33 33"><path class="kf" d="M1.500 1.500h30v30h-30z"/><path class="gt" d="M2.500 4h28"/><path d="M22 7h9v24H2v-8h20z" fill="#91bbee"/><path d="M2 16h20M12 7v16" stroke="#797774" stroke-width="1.600"/><path d="M22 7v24M2 23h30M22 16h10M12 23v8" stroke="#2f5fb8" stroke-width="1.700"/><path class="k" d="M1.500 7h30M1.500 1.500h30v30h-30z"/></svg>
      <svg viewBox="0 0 33 33"><text x="5" y="27" class="rpy" textLength="17" lengthAdjust="spacingAndGlyphs">R</text></svg>

      <svg viewBox="0 0 33 33"><text x="-1" y="23.500" class="rpy" textLength="34" lengthAdjust="spacingAndGlyphs">Py</text></svg>
      <svg viewBox="0 0 33 33"><path d="M2 7h20" stroke="#4a89cc" stroke-width="2"/><circle class="bf" cx="26" cy="7" r="4"/><path d="M2 16h15M2 23h8" stroke="#797774" stroke-width="2"/><circle class="g0" cx="19" cy="15.500" r="2.300"/><circle class="g0" cx="12.500" cy="22.500" r="2.300"/><path class="k" d="M1.500 0v31.500H33"/></svg>
      <svg viewBox="0 0 33 33"><path class="k" d="M12 16h8M17 5v22M17 5h3M17 27h3"/><path class="bf" d="M1 11.500h12v8.500H1zM20 1.500h12v7.500H20zM20 11.500h12v8.500H20zM20 22.500h12V30H20z"/></svg>
      <svg viewBox="0 0 33 33"><path d="M1.500 2.500h30V23H14l-7 7v-7H1.500z" fill="#fafafa" stroke="#2f5fb8" stroke-width="2"/></svg>
      <svg viewBox="0 0 33 33"><path class="kf" d="M4.500 8V1.500H19l9 9v21H4.500V17"/><path class="k" d="M19 1.500v9h9"/><circle class="bf" cx="5.500" cy="13" r="3.300"/><path d="M13 15.500h11M9 21h11" stroke="#4a89cc" stroke-width="2"/></svg>
      <svg viewBox="0 0 33 33"><path class="k" d="M9 4H1.500v6c0 4 4 6 8 6M24 4h7.500v6c0 4-4 6-8 6"/><path class="kf" d="M8 3h17v9c0 7-4 11-8.500 11S8 19 8 12z"/><path class="k" d="M14 23c0 2-2 3-3 5M19 23c0 2 2 3 3 5"/><path class="bf" d="M8.500 1h16v4h-16zM8.500 27.500h16V31h-16z"/></svg>

      <svg viewBox="0 0 33 33"><path d="M4 .500h15l9.500 9.500v23H4z" fill="#fafafa" stroke="#333" stroke-width="2.600"/><path d="M19 .500V10h9.500" fill="none" stroke="#333" stroke-width="2.200"/><path d="M9.500 18v11M16 23v6M22.500 14v15" stroke="#333" stroke-width="4"/></svg>
      <svg viewBox="0 0 33 33"><path class="kf" d="M14 6h17.500v23h-30V22"/><path d="M4 26h25" stroke="#797774" stroke-width="1.600"/><text x="6" y="23" class="n123" textLength="23" lengthAdjust="spacingAndGlyphs">123</text><path class="bolt" d="M5 1h9.500l-5 8h4L1 21l3-9.500H-.500z"/></svg>
      <svg viewBox="0 0 33 33"><path d="M9 16V6h8v10z" fill="#2f5fb8"/><path class="g0" d="M18 2.500h13v13H18zM2 18.500h13v13H2zM18 18.500h10v13H18z"/><path d="M15 16h20v19H20z" fill="#f4f4f4"/><path class="kf" d="M17 18.500h16.500v3l-6 5.500v7h-4.500v-7L17 21.500z"/><path class="bolt" d="M5 1h9.500l-5 8h4L1 21l3-9.500H-.500z"/></svg>
      <svg viewBox="0 0 33 33"><path d="M8 2.500h23V15l-8 4-4 6-1 7H2.500V16" fill="#fafafa" stroke="#3b78c8" stroke-width="2.500"/><path d="M20 10h9v5c-6 3-9 9-11 16H8v-5l6-4 2-8z" fill="#91bbee"/><path d="M-1 1c0-2 11-2 11 0v11l-5 7-6-7z" fill="#ca6a07"/><circle cx="4.500" cy="6.500" r="2.500" fill="#fff"/><circle cx="28" cy="28" r="5" fill="#ca6a07"/><circle cx="31.500" cy="19.500" r="2.500" fill="#ca6a07"/></svg>
      <svg viewBox="0 0 33 33"><path d="M13 3 1.500 17 13 31c2 1 3 1 4-1l3 1 11.500-14L20 3l-3-1c-1 1-3 0-4 1zM12.500 10l7-8M12.500 10 26 24M12.500 24 26 10M12.500 24l7 7M12.500 24l7-7-7-7" class="pu"/></svg>
      <svg viewBox="0 0 33 33"><path d="M2 3.500h21L31.500 16 23 28.500H2v-3L9 16 2 7zM11 28 31 11M2 24 21 4M11 28 24 12" fill="#fafafa" fill-opacity=".500" stroke="#3f7fe0" stroke-width="1.800"/></svg>
    </div>
    <div class="more"><b></b><b></b><b></b></div>
    <div class="custom"><svg width="32" height="32" viewBox="0 0 32 32"><path d="M2 21h6v9H2zM9 11h6v19H9zM16 1h6v29h-6zM23 6h6v24h-6z" fill="#f2dc00" stroke="#c99700" stroke-width="2"/></svg></div>
    <div class="wells">
      <p class="values">Values</p>
      <div class="well">Add data fields here</div>
      <p class="drill">Drill through</p>
      <div class="tg"><span>Cross-report</span><div class="sw off"><b></b>Off</div></div>
      <div class="tg"><span>Keep all filters</span><div class="sw onn">On<b></b></div></div>
      <div class="well white">Add drill-through fields here</div>
    </div>
  </section>

  <section class="data">
    <div class="ptitle"><h2>Data</h2><svg class="dc"><use href="#dbl-chevron"/></svg></div>
    <div class="dsearch"><svg width="26" height="26"><use href="#mag"/></svg>Search</div>
    <div class="orders"><svg width="14" height="9" viewBox="0 0 14 9"><path d="m1 1 6 6.500L13 1" fill="none" stroke="#484644" stroke-width="1.300"/></svg><svg width="24" height="24" viewBox="0 0 24 24"><rect x="2" y="2" width="20" height="20" rx="4" class="o"/><path class="o" d="M8 2v20M16 2v20M2 7.500h20M2 16.500h20"/></svg><span>Orders</span></div>
    <ul>
      <li><i></i><b></b><em></em><span>Category</span></li>
      <li><i></i><b></b><em></em><span>City</span></li>
      <li><i></i><b></b><em></em><span>Country/Region</span></li>
      <li><i></i><b></b><em></em><span>Customer ID</span></li>
      <li><i></i><b></b><em></em><span>Customer Name</span></li>
      <li><i></i><b></b><em><svg><use href="#sigma"/></svg></em><span>Discount</span></li>
      <li><i><svg><use href="#expand"/></svg></i><b></b><em><svg><use href="#calendar"/></svg></em><span>Order Date</span></li>
      <li><i></i><b></b><em></em><span>Order ID</span></li>
      <li><i></i><b></b><em><svg><use href="#sigma"/></svg></em><span>Postal Code</span></li>
      <li><i></i><b></b><em></em><span>Product ID</span></li>
      <li><i></i><b></b><em></em><span>Product Name</span></li>
      <li><i></i><b></b><em><svg><use href="#sigma"/></svg></em><span>Profit</span></li>
      <li><i></i><b></b><em><svg><use href="#sigma"/></svg></em><span>Quantity</span></li>
      <li><i></i><b></b><em></em><span>Region</span></li>
      <li><i></i><b></b><em><svg><use href="#sigma"/></svg></em><span>Row ID</span></li>
      <li><i></i><b></b><em><svg><use href="#sigma"/></svg></em><span>Sales</span></li>
      <li><i></i><b></b><em></em><span>Segment</span></li>
      <li><i><svg><use href="#expand"/></svg></i><b></b><em><svg><use href="#calendar"/></svg></em><span>Ship Date</span></li>
      <li><i></i><b></b><em></em><span>Ship Mode</span></li>
      <li><i></i><b></b><em></em><span>State</span></li>
      <li><i></i><b></b><em></em><span>Sub-Category</span></li>
    </ul>
  </section>
</main>

<footer class="status">
  <span class="count">Page 1 of 1</span>
  <svg class="zoom" width="216" height="24" viewBox="0 0 216 24"><path d="M1 12h8" stroke="#444" stroke-width="3"/><path d="M17 12h175" stroke="#444" stroke-width="1.300"/><path d="M72.500 2.500v19" stroke="#444" stroke-width="7"/><path d="M105 7.500v9" stroke="#444" stroke-width="1.700"/><path d="M202 11.500h13M208.500 5v13" stroke="#444" stroke-width="2.600"/></svg>
  <span class="pct">67%</span>
  <svg class="fit" width="26" height="20" viewBox="0 0 26 20"><rect x="1" y="1" width="23.500" height="17.500" rx="3" class="k"/><path class="k" d="M9 5.500H5V8M5 11.500V14h4M17 5.500h4V8M21 11.500V14h-4"/></svg>
</footer>

<footer class="taskbar">
  <div class="weather">
    <svg width="44" height="50" viewBox="0 0 44 50"><path d="M3 25h36c4 14-8 20-18 20S2 36 3 25z" fill="url(#sunGrad)"/><path d="M9 15h7M9 22h22M2 29h18M28 29h6M2 36h34" stroke="#77797b" stroke-width="3" stroke-linecap="round"/><circle cx="34" cy="11" r="14" fill="#ff99a4"/><text x="29" y="17.500" class="bdg">1</text></svg>
    <div><p>17°C</p><p class="hz">Haze</p></div>
  </div>
  <div class="slots">
    <div class="slot"><svg width="44" height="44" viewBox="0 0 44 44"><path d="M2 2h20v19H2zM23 2h20v19H23zM2 23h20v19H2zM23 23h20v19H23z" fill="url(#winGrad)"/></svg></div>
    <div class="pill"><svg width="28" height="28" viewBox="0 0 28 28"><circle cx="12" cy="11.500" r="9.500" fill="#5a5b5d" stroke="#e8e8e8" stroke-width="2.500"/><path d="m19 19 7 7" stroke="#e8e8e8" stroke-width="3"/></svg><span>Search</span>
      <svg class="art" width="82" height="48" viewBox="0 0 82 48"><path d="M1 36 18 30l44-5 18 10-4 9-14 3H14L4 43z" fill="#d6b084"/><path d="M1 36 18 30l44-5 18 10-10 4H14z" fill="#ecccaa"/><path d="m10 19 24-5 5 19-23 6z" fill="#4c9a52"/><path d="m8 16 12-1 15-3 3 19-11 2-12 4z" fill="#f4f2f8"/><path d="m20 15 6 18M11 20l8-2M12 25l9-2M14 30l9-2M24 18l9-2M25 23l9-2" stroke="#8c86a8" stroke-width="1.300"/><path d="m30 22 6-14 6 3-7 13-5 3z" fill="#f9a42b"/><path d="m36 8 2-5 6 2-2 6z" fill="#f06a5c"/><path d="M51 17c0-18 23-18 23 0v19c0 5-23 5-23 0z" fill="#1677f2"/><path d="M55 26h15v11H55z" fill="#5b35e8"/><path d="M58 4c0-5 9-5 9 0" fill="none" stroke="#1677f2" stroke-width="2"/><path d="M52 20c5 4 16 4 21 0" fill="none" stroke="#32c8ff" stroke-width="2"/></svg>
    </div>
    <div class="slot"><svg width="44" height="44" viewBox="0 0 44 44"><rect x="1" y="14" width="31" height="27" rx="2" fill="#616161"/><rect x="12" y="3" width="31" height="28" rx="2" fill="#f2f2f2"/><path d="M12 14h20v17H12z" fill="#b5b5b5"/></svg></div>
    <div class="slot run"><svg width="44" height="44" viewBox="0 0 44 44"><path d="M1 7c0-3 1-4 3-4h9l5 5v8H1z" fill="#dea31a"/><rect x="1" y="7" width="42" height="34" rx="2" fill="url(#folderGrad)"/><path d="M8 41V32c0-3 2-4 5-4h17c3 0 5 1 5 4v9z" fill="#1273c4"/><path d="M14 35h16" stroke="#0b4f91" stroke-width="2"/></svg></div>
    <div class="slot run"><svg class="ov" width="60" height="58" viewBox="0 0 60 58"><path d="M10 53l3-11a19 19 0 1 1 8 8z" fill="none" stroke="#25d366" stroke-width="4.500"/><path d="M22 24c2-4 4-3 5-1l2 4-2 3c2 4 5 6 9 8l3-3 5 3c1 3-2 6-6 6-9-1-17-10-16-20z" fill="#25d366"/><circle cx="45" cy="17" r="14" fill="#a9c9d1"/><text x="40" y="23.500" class="bdg">1</text></svg></div>
    <div class="slot run"><svg width="44" height="44" viewBox="0 0 44 44"><circle cx="22" cy="22" r="21" fill="url(#edgeLow)"/><path d="M1 20C3 7 12 1 23 1c12 0 21 9 20 19-1 6-5 9-11 9-4 0-6-1-4-4 3-6-1-11-8-11C11 14 5 17 1 20z" fill="url(#edgeTop)"/><path d="M16 28c0-6 2-10 6-11-7-2-14 4-14 12 0 8 7 14 16 14 6 0 11-2 15-8-7 4-22 3-23-7z" fill="#0d4f9a"/></svg></div>
    <div class="slot"><svg width="44" height="44" viewBox="0 0 44 44"><path d="M13 0h18l3 4 5 2v12l-5 17-12 9-12-9L5 18V6l5-2z" fill="url(#braveGrad)"/><path d="m12 9 6 1 4-1 4 1 6-1 4 7-4 8 1 4-7 4-4 5-4-5-7-4 1-4-4-8z" fill="#fff"/><path d="m12 16 8 2-2 4zM32 16l-8 2 2 4zM22 20l2 7-2 2-2-2zM17 29l5-2 5 2-5 2z" fill="#f2401a"/></svg></div>
    <div class="slot run"><svg class="ov" width="60" height="58" viewBox="0 0 60 58"><circle cx="30" cy="33" r="21" fill="#f0c024"/><path d="M30 33 11.800 22.500A21 21 0 0 1 48.200 22.500H30z" fill="#e8392c"/><path d="M11.800 22.500 21 39l9 4-2 11a21 21 0 0 1-16.200-31.500z" fill="#2f9e48"/><path d="M30 22h19a21 21 0 0 1-19 32l9-17z" fill="#fbc820"/><circle cx="30" cy="33" r="10.500" fill="#fff"/><circle cx="30" cy="33" r="8" fill="#3f7fea"/><circle cx="45" cy="16" r="13.500" fill="#b9bcb8"/><path d="M38 28c0-9 3-12 7-12s8 3 9 9c-4 5-12 6-16 3z" fill="#1c5a9c"/><circle cx="45" cy="10" r="4.500" fill="#4a3428"/></svg></div>
    <div class="slot run"><svg width="44" height="44" viewBox="0 0 44 44"><circle cx="24" cy="22" r="19" fill="#ed6c47"/><path d="M24 3a19 19 0 0 1 19 19H24z" fill="#ff8f6b"/><path d="M43 22a19 19 0 0 1-19 19V22z" fill="#d35230"/><rect x="1" y="11" width="21" height="21" rx="2" fill="#c43e1c"/><text x="6.500" y="27" class="ppt">P</text></svg></div>
    <div class="slot active"><svg width="44" height="44" viewBox="0 0 44 44"><path d="M23 1h13q2 0 2 2v40H23z" fill="url(#biA)"/><path d="M14 13q0-2 2-2h11q2 0 2 2v30H14z" fill="url(#biB)"/><path d="M6 24q0-2 2-2h10q2 0 2 2v19H8q-2 0-2-2z" fill="url(#biC)"/></svg></div>
  </div>
  <div class="tray">
    <svg class="t1" width="20" height="14" viewBox="0 0 20 14"><path d="m1.500 12 8.500-9 8.500 9" fill="none" stroke="#fff" stroke-width="2.200"/></svg>
    <svg class="t2" width="30" height="20" viewBox="0 0 30 20"><path d="M7 18a6 6 0 0 1-1-12 9 9 0 0 1 16 0 6 6 0 0 1 1 12z" fill="#a5a7a8"/><path d="m3 17 14-9 11 6c0 3-2 5-5 5H7z" fill="#fff"/></svg>
    <svg class="t3" width="30" height="30" viewBox="0 0 30 30"><path d="M2 15C2 3 18-3 27 9M28 1v9h-9M2 28v-9h8M2 19c3 7 9 9 14 8" fill="none" stroke="#c2c6c6" stroke-width="1.700"/><circle cx="22" cy="22" r="7" fill="#ff9800"/></svg>
    <div class="lang">ENG<br>IN</div>
    <svg class="t4" width="30" height="24" viewBox="0 0 30 24"><path d="M1.500 10a19 19 0 0 1 27 0M5.500 14a13.500 13.500 0 0 1 19 0M9.500 17.500a8 8 0 0 1 11 0" fill="none" stroke="#fff" stroke-width="2"/><circle cx="15" cy="20" r="2.500" fill="#fff"/></svg>
    <svg class="t5" width="30" height="24" viewBox="0 0 30 24"><path d="M1.500 8.500h4L12 3v18l-6.500-5.500h-4zM16 8c2 2 2 6 0 8" fill="none" stroke="#fff" stroke-width="2"/><path d="M19.500 5c4 4 4 10 0 14M23 2c6 6 6 14 0 20" fill="none" stroke="#666a6a" stroke-width="1.800"/></svg>
    <svg class="t6" width="30" height="20" viewBox="0 0 30 20"><rect x="1.500" y="2" width="23" height="16" rx="4" fill="none" stroke="#fff" stroke-width="2"/><path d="M27 7.500v5" stroke="#fff" stroke-width="3"/><rect x="4.500" y="5" width="7" height="10" rx="1" fill="#fff"/></svg>
    <div class="clock">00:39<br><span>22-11-2024</span></div>
    <svg class="t7" width="24" height="28" viewBox="0 0 24 28"><path d="M12 1c6 0 8 4 8 9v7l3 4v1H1v-1l3-4v-7c0-5 2-9 8-9zM8 24h8c-1 4-7 4-8 0z" fill="#c5e6ea"/></svg>
  </div>
</footer>
</body>
</html>
```
FILE: styles.css
```css
* { box-sizing: border-box; }
body {
  margin: 0; width: 2560px; height: 1600px; overflow: hidden;
  background: #f4f4f4; color: #252423;
  font: 20px "Open Sans", "Noto Sans", sans-serif;
}
h2, h3, h4, p, ul { margin: 0; padding: 0; font-weight: 400; }
svg { display: block; flex: none; overflow: visible; }
.defs { position: absolute; }
span, a, label { white-space: nowrap; }

/* shared icon paints */
.k { fill: none; stroke: #3a3a38; stroke-width: 1.9; }
.kf { fill: #fafafa; stroke: #3a3a38; stroke-width: 1.9; }
.bf { fill: #91bbee; stroke: #2f5fb8; stroke-width: 1.9; }
.bl { fill: #91bbee; }
.bs { fill: none; stroke: #2f5fb8; stroke-width: 1.9; }
.gf { fill: #c8c6c4; stroke: #797774; stroke-width: 1.8; }
.g0 { fill: #fafafa; stroke: #797774; stroke-width: 1.8; }
.gt { stroke: #c8c6c4; stroke-width: 4; }
.w { fill: none; stroke: #333; stroke-width: 1.6; }
.ws { fill: none; stroke: #fff; stroke-width: 1.8; }
.d { fill: none; stroke: #bbb; stroke-width: 1.8; }
.d2 { stroke: #bbb; stroke-width: 1.8; }
.t { fill: none; stroke: #252423; stroke-width: 2.1; }
.tr { fill: none; stroke: #444; stroke-width: 1.1; }
.o { fill: none; stroke: #252423; stroke-width: 1.8; }
.pu { fill: none; stroke: #8a2aa0; stroke-width: 1.7; }
.halo { fill: #fff; stroke: #fff; stroke-width: 6; }
.bolt { fill: #f9d27c; stroke: #ca6a07; stroke-width: 1.8; }
.n123 { font-size: 18px; fill: #4a89cc; }
.rpy { font-size: 29px; font-weight: 700; fill: #4189d2; }
.dax { font-size: 12.500px; font-weight: 700; fill: #333; }
.bdg { font-size: 18px; fill: #111; }
.ppt { font-size: 17px; font-weight: 700; fill: #fff; }

/* title bar */
.titlebar { height: 60px; display: flex; align-items: center; padding: 0 12px 0 28px; color: #444; }
.tb-save { width: 29px; height: 28px; }
.tb-undo { width: 26px; height: 28px; margin-left: 24px; }
.tb-redo { width: 26px; height: 28px; margin-left: 25px; }
.tb-title { font-size: 20px; letter-spacing: .05px; margin: 10px 0 0 16px; }
.tb-user { font-size: 20px; letter-spacing: .05px; margin: 4px 0 0 auto; }
.tb-avatar { width: 36px; height: 36px; margin-left: 17px; }
.tb-win { width: 20px; height: 20px; margin: 4px 0 0 57px; }
.tb-avatar + .tb-win { margin-left: 54px; }
.tb-win:last-child { margin-right: 15px; }

/* menu */
.menu {
  height: 63px; padding: 4px 9px 0 40px; display: grid; align-items: start; justify-items: start;
  grid-template-columns: 95px 107px 103px 144px 92px 140px 1fr 146px;
  font-size: 23.500px; color: #444; letter-spacing: -.1px;
}
.menu a { line-height: 43px; padding-top: 2px; border-bottom: 3px solid transparent; }
.menu .on { font-weight: 600; color: #1f1f1f; border-color: #317b66; letter-spacing: -.4px; }
.share {
  grid-column: 8; width: 146px; height: 42px; margin-top: 3px; border: 0; border-radius: 6px;
  background: #317b66; color: #fff; font: 600 19.500px "Open Sans", sans-serif; letter-spacing: -.5px;
  display: flex; align-items: center; padding: 0 0 0 12px; gap: 9px;
}
.share span { margin: 1px 0 0 5px; }

/* ribbon */
.ribbon {
  position: relative; z-index: 2; height: 175px; margin: 0 13px 0 14px; padding-top: 7px;
  background: #fff; border-radius: 14px; box-shadow: 0 3px 9px rgba(0, 0, 0, .17); display: flex;
}
.grp { height: 161px; border-right: 2px solid #d0d0d0; display: flex; flex-direction: column; }
.grp label { font-size: 17.300px; line-height: 34px; height: 33px; text-align: center; letter-spacing: -.3px; color: #333; }
.btns { display: flex; height: 128px; padding-top: 5px; }
.g-clip { width: 281px; } .g-data { width: 641px; } .g-query { width: 201px; } .g-insert { width: 258px; }
.g-calc { width: 324px; } .g-sens { width: 128px; } .g-share { width: 103px; } .g-copilot { width: 102px; }
.g-data .btns { padding-left: 7px; }
.g-query .btns { padding-left: 12px; }
.g-insert .btns { padding-left: 19px; }
.g-calc .btns { padding-left: 13px; }
.g-sens .btns, .g-share .btns, .g-copilot .btns { justify-content: center; }
.b { display: flex; flex-direction: column; align-items: center; }
.b > svg { width: 60px; height: 60px; }
.b > span { font-size: 19.600px; line-height: 28px; text-align: center; margin-top: 3px; letter-spacing: -.05px; }
.cr { display: inline-block; width: 11px; height: 8px; margin: 0 0 2px 4px; }
.w60 { width: 60px; } .w62 { width: 62px; } .w74 { width: 74px; } .w76 { width: 76px; } .w78 { width: 78px; }
.w80 { width: 80px; } .w84 { width: 84px; } .w85 { width: 85px; } .w88 { width: 88px; } .w90 { width: 90px; }
.w100 { width: 100px; } .w102 { width: 102px; } .w120 { width: 120px; } .w124 { width: 124px; }
.dim { color: #c3c3c3; }
.paste { width: 90px; padding-left: 7px; display: flex; flex-direction: column; align-items: center; }
.paste svg { width: 60px; height: 60px; }
.paste span { font-size: 19.600px; line-height: 28px; margin-top: 3px; }
.clips { display: flex; flex-direction: column; margin-top: -6px; }
.clips div { height: 45.500px; flex: none; display: flex; align-items: center; gap: 6px; font-size: 19.800px; letter-spacing: -.15px; white-space: nowrap; }
.clips svg { width: 29px; height: 29px; }
.fold { width: 17px; height: 12px; margin: 138px 15px 0 auto; }

/* work area */
.work { height: 1176px; display: grid; grid-template-columns: 71px 1859px 316px 314px; }
.rail { border-right: 1px solid #e6e6e6; }
.rail div { height: 70px; display: flex; align-items: center; padding: 0 0 4px 18px; }
.rail svg { width: 36px; height: 36px; }
.rail .rail-on { border-left: 5px solid #317b66; padding: 0 0 2px 13px; }
.center { background: #fff; display: flex; flex-direction: column; }
.upper { height: 1115px; display: flex; }
.canvas { width: 1507px; display: flex; flex-direction: column; padding-left: 97px; }
.canvas h3 { font: 19.500px/26px Roboto, sans-serif; letter-spacing: .1px; margin: 50px 0 0 1px; height: 35px; }
.ctools { width: 1344px; height: 31px; border-bottom: 2px solid #f3f3f3; display: flex; gap: 13px; padding: 1px 0 0 8px; }
.ctools .info { margin: -1px 7px 0 auto; }
.plot { width: 1344px; height: 696px; }
.leg { font-size: 12.800px; fill: #333; }
.ax { font-size: 12.300px; fill: #666; }
.fold-line { height: 3px; margin: 35px 1px 0 -95px; background: repeating-linear-gradient(90deg, #555 0 3px, transparent 3px 6px); }

/* pane headings */
.ptitle { height: 79px; padding-bottom: 13px; display: flex; align-items: center; }
.ptitle h2 { font-size: 26.800px; font-weight: 600; letter-spacing: -.5px; color: #252423; padding-top: 2px; }
.dc { width: 14px; height: 15px; }

/* filters */
.filters { width: 352px; border-left: 1px solid #999; }
.filters .ptitle { padding-left: 23px; }
.filters .ptitle > svg:first-child { margin-right: 16px; }
.eye { margin-left: auto; margin-right: 36px; }
.filters .dc { margin-right: 22px; }
.fsearch { width: 315px; height: 52px; margin: 0 0 7px 14px; border: 1.500px solid #999; border-radius: 3px; display: flex; align-items: center; font-size: 21px; letter-spacing: -.2px; padding: 0 0 2px 19px; gap: 27px; }
.fhead { border-top: 1.500px solid #999; padding: 29px 24px 0 14px; height: 73px; display: flex; justify-content: space-between; line-height: 30px; }
.fhead i { font-style: normal; }
.fhead.second { border: 0; height: 91px; padding-top: 47px; }
.fbox { width: 322px; height: 78px; margin-left: 14px; border: 1.500px solid #c8c8c8; border-radius: 3px; text-align: center; line-height: 78px; padding-top: 1px; letter-spacing: -.05px; }

/* page tabs */
.tabs { height: 61px; display: flex; }
.dev { width: 42px; height: 54px; margin-left: 18px; border-bottom: 6px solid #317b66; border-radius: 3px; padding: 10px 0 0 6px; }
.phone { margin: 10px 0 0 47px; }
.tri { margin: 22px 0 0 39px; }
.tri.two { margin-left: 28px; }
.tab { width: 134px; margin-left: 11px; border-left: 1px solid #999; border-right: 1px solid #999; border-bottom: 7px solid #317b66; text-align: center; font-weight: 600; font-size: 19.800px; letter-spacing: -.5px; line-height: 63px; }
.plus { width: 68px; background: #317b66; display: flex; align-items: center; justify-content: center; padding-bottom: 3px; }

/* visualizations */
.viz { border-right: 1.500px solid #cfcfcf; box-shadow: -1px 0 #cfcfcf; display: flex; flex-direction: column; }
.viz .ptitle { padding-left: 14px; padding-right: 18px; justify-content: space-between; }
.viz h4 { font-weight: 600; font-size: 19.800px; letter-spacing: -.5px; line-height: 20px; height: 22px; padding-left: 14px; margin-top: -8px; }
.modes { display: flex; margin: 9px 0 0 14px; height: 63px; }
.mode { width: 56px; height: 56px; background: #fff; border-radius: 4px; padding: 7px 0 0 6px; }
.fmt { margin: 6px 0 0 66px; }
.notch { margin-top: -2px; }
.icons { display: grid; grid-template-columns: repeat(6, 33px); column-gap: 16px; grid-auto-rows: 33px; row-gap: 16px; margin: 18px 0 0 19px; }
.icons svg { width: 33px; height: 33px; }
.more { display: flex; gap: 3px; margin: 28px 0 0 26px; height: 32px; }
.more b { width: 4px; height: 4px; border-radius: 2px; background: #252423; }
.custom { border-top: 1.500px dashed #dcdcdc; margin: 0 10px 0 11px; padding: 14px 0 0 8px; height: 61px; }
.wells { border-top: 1.500px solid #d6d6d6; }
.wells p { padding-left: 21px; line-height: 30px; letter-spacing: -.1px; }
.values { margin-top: 15px; height: 37px; }
.well { width: 298px; height: 49px; margin-left: 7px; border: 1.500px dashed #cfcfcf; border-radius: 3px; line-height: 48px; padding-left: 18px; letter-spacing: -.02px; }
.well.white { background: #fff; height: 44px; line-height: 44px; padding-left: 14px; margin-top: 7px; }
.wells .drill { font-weight: 600; margin-top: 19px; height: 33px; letter-spacing: -.3px; }
.tg { height: 48px; display: flex; justify-content: space-between; align-items: center; padding: 0 38px 0 21px; letter-spacing: -.1px; }
.tg span { margin-bottom: 2px; }
.sw { width: 56px; height: 28px; border-radius: 14px; display: flex; align-items: center; font-size: 15px; gap: 4px; margin-top: 1px; }
.sw b { width: 14px; height: 14px; border-radius: 7px; }
.off { border: 1.500px solid #605e5c; color: #605e5c; padding-left: 7px; } .off b { background: #605e5c; }
.onn { background: #317b66; color: #fff; padding-left: 8px; gap: 6px; } .onn b { background: #fff; }

/* data */
.data .ptitle { padding: 0 17px 13px 14px; justify-content: space-between; }
.dsearch { width: 299px; height: 42px; margin-left: 7px; background: #fff; border: 1.500px solid #cfcfcf; border-bottom-color: #707070; border-radius: 6px; display: flex; align-items: center; gap: 12px; padding-left: 20px; font-size: 21px; color: #555; letter-spacing: -.2px; }
.orders { height: 58px; padding: 18px 0 0 26px; display: flex; align-items: center; color: #323130; letter-spacing: -.2px; }
.orders svg + svg { margin: 0 10px 0 8px; }
.orders span { margin-top: 1px; }
.data ul { list-style: none; color: #323130; }
.data li { height: 42px; display: flex; align-items: center; letter-spacing: -.12px; padding-left: 55px; }
.data li span { margin-top: 3px; }
.data i { width: 22px; } .data i svg { width: 10px; height: 16px; }
.data li b { width: 21px; height: 21px; border: 1.500px solid #616161; border-radius: 4px; margin-right: 13px; }
.data em { width: 32px; } .data em svg { width: 24px; height: 24px; }

/* status bar */
.status { height: 41px; border-top: 1.500px solid #cfcfcf; display: flex; align-items: center; padding: 1px 31px 0 7px; color: #444; }
.count { margin-top: 2px; letter-spacing: .1px; }
.zoom { margin-left: auto; }
.pct { margin-left: 23px; width: 75px; letter-spacing: -.5px; }

/* taskbar */
.taskbar { height: 85px; background: #1f2324; border-top: 1px solid #000; box-shadow: inset 0 2px #414646; display: grid; grid-template-columns: 737px 1258px 565px; color: #fff; }
.weather { display: flex; padding: 13px 0 0 33px; gap: 12px; font-size: 19.500px; letter-spacing: -.3px; }
.weather p { line-height: 27px; } .weather p:first-child { margin-top: 1px; }
.weather .hz { color: #c4c4c4; letter-spacing: .2px; }
.slots { display: flex; }
.slot { width: 77px; height: 84px; display: flex; flex-direction: column; align-items: center; padding-top: 20px; }
.ov { margin: -11px 0 -3px; }
.run::after { content: ""; width: 10px; height: 5px; border-radius: 3px; background: #9a9fa0; margin-top: 6px; }
.active { width: 69px; height: 70px; margin: 7px 4px; background: #2a3033; border: 1px solid #3a4043; border-radius: 6px; padding-top: 12px; }
.active::after { content: ""; width: 27px; height: 5px; border-radius: 3px; background: #a9c9d1; margin-top: 6px; }
.pill { width: 385px; height: 56px; margin: 14px 3px 0 6px; border: 1.500px solid #5c5e60; border-radius: 28px; background: #3c3e40; display: flex; align-items: center; padding-left: 18px; font-size: 22px; color: #d6d6d6; letter-spacing: -.3px; }
.pill span { margin: 1px 0 0 17px; }
.art { margin-left: auto; margin-right: 8px; }
.tray { display: flex; font-size: 19.800px; line-height: 28px; }
.t1 { margin-top: 36px; } .t2 { margin: 33px 0 0 31px; } .t3 { margin: 27px 0 0 26px; }
.lang { width: 60px; margin: 16px 0 0 22px; text-align: center; }
.t4 { margin: 30px 0 0 21px; } .t5 { margin: 29px 0 0 12px; } .t6 { margin: 32px 0 0 12px; }
.clock { width: 136px; margin-top: 14px; text-align: right; }
.clock span { letter-spacing: .5px; }
.t7 { margin: 28px 0 0 15px; }
```
